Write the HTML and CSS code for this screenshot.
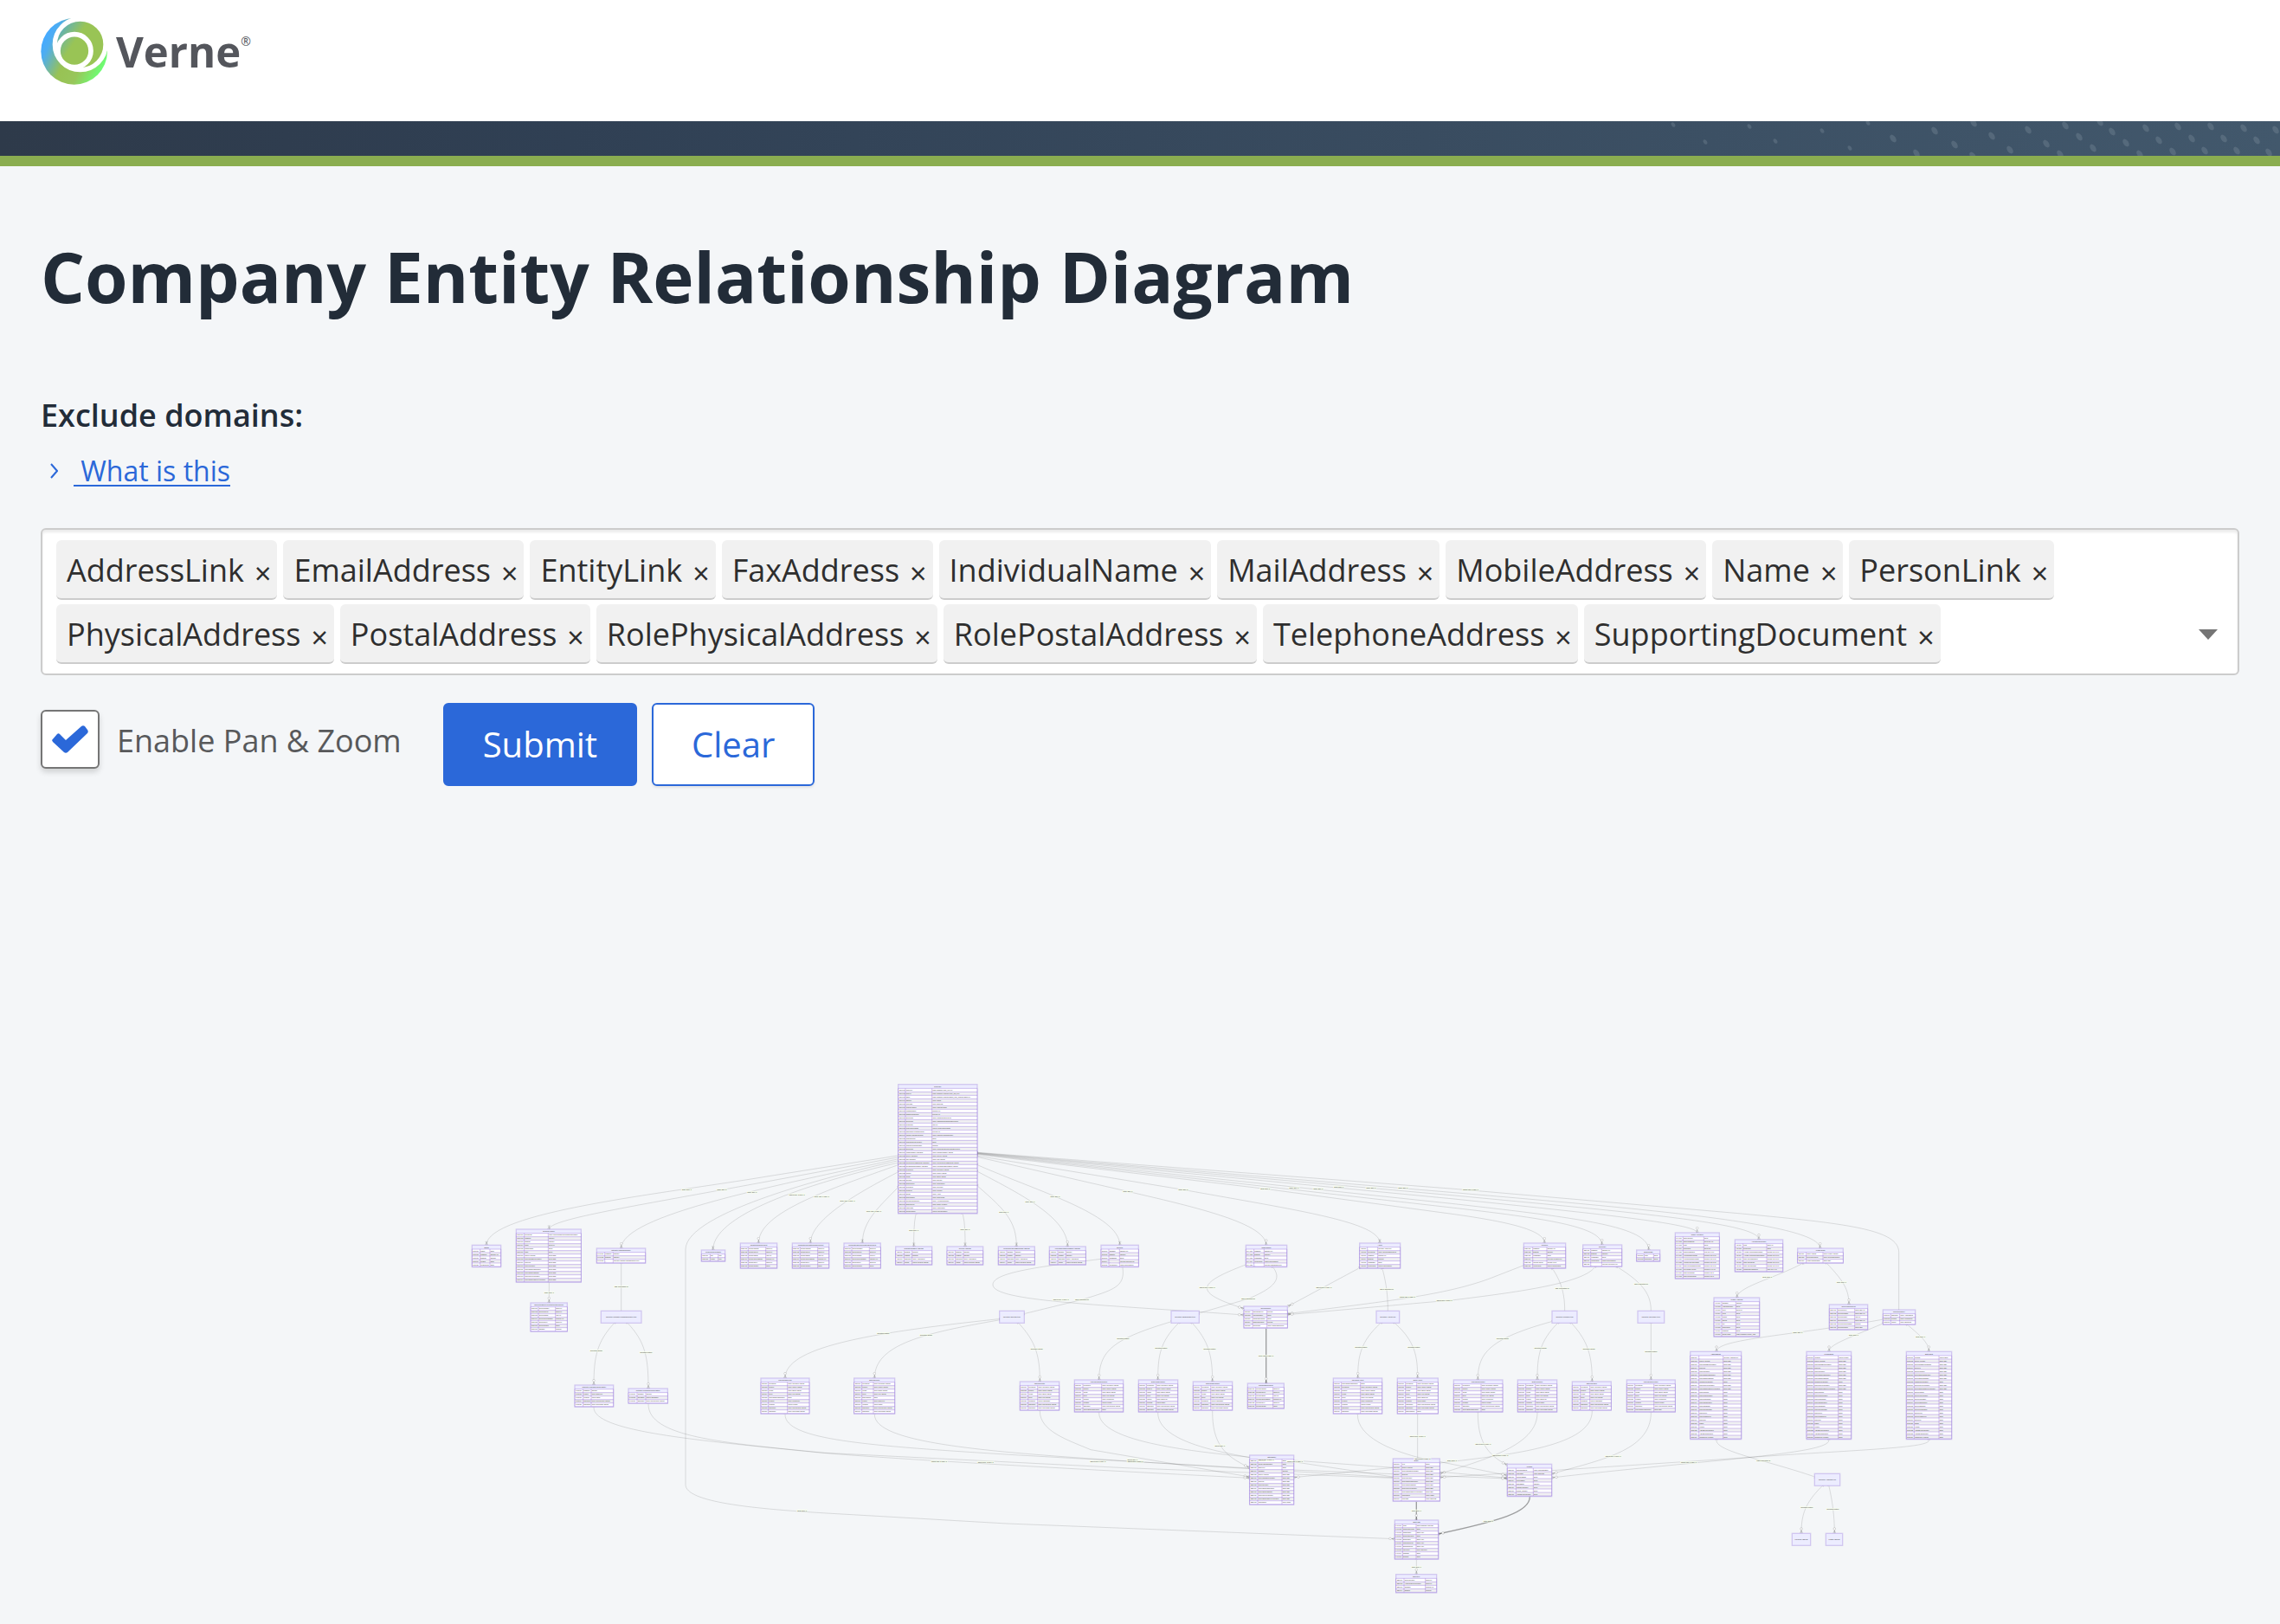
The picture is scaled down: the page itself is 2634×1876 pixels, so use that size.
FILE: index.html
```html
<!DOCTYPE html>
<html lang="en">
<head>
<meta charset="utf-8">
<meta name="viewport" content="width=device-width, initial-scale=1">
<title>Company Entity Relationship Diagram</title>
<link rel="stylesheet" href="styles.css">
</head>
<body>
<header class="site-header">
  <a class="brand" href="#" aria-label="Verne home">
    <svg class="brand-mark" viewBox="0 0 234 234" aria-hidden="true">
      <defs>
        <linearGradient id="brandOuter" gradientUnits="userSpaceOnUse" x1="10" y1="80" x2="225" y2="185">
          <stop offset="0" stop-color="#45aaff"/>
          <stop offset=".1" stop-color="#4eadf0"/>
          <stop offset=".4" stop-color="#98c254"/>
          <stop offset=".65" stop-color="#98c65a"/>
          <stop offset=".95" stop-color="#6cff74"/>
        </linearGradient>
        <linearGradient id="brandInner" gradientUnits="userSpaceOnUse" x1="50" y1="50" x2="140" y2="110">
          <stop offset="0" stop-color="#55aec8"/>
          <stop offset=".7" stop-color="#99c455"/>
        </linearGradient>
      </defs>
      <circle cx="116" cy="118" r="115" fill="url(#brandOuter)"/>
      <circle cx="137" cy="94" r="88" fill="url(#brandInner)" stroke="#fff" stroke-width="16"/>
      <circle cx="117" cy="116" r="57" fill="url(#brandInner)" stroke="#fff" stroke-width="17"/>
    </svg>
    <span class="brand-name">Verne</span><sup class="brand-reg">®</sup>
  </a>
</header>
<div class="banner">
  <svg class="banner-dots" id="bannerDots" viewBox="0 0 734 40" aria-hidden="true"></svg>
</div>

<main class="page">
  <h1 class="page-title">Company Entity Relationship Diagram</h1>

  <form class="filters">
    <label class="field-label" for="exclude">Exclude domains:</label>
    <p class="help">
      <svg class="help-icon" viewBox="0 0 9 18" aria-hidden="true"><path d="M1 1l7 8-7 8" fill="none" stroke="currentColor" stroke-width="2"/></svg>
      <a class="help-link" href="#help">&nbsp;What is this</a>
    </p>

    <div class="combo">
      <ul class="tags">
        <li class="tag">AddressLink<button class="tag-remove" type="button" aria-label="Remove AddressLink">×</button></li>
        <li class="tag">EmailAddress<button class="tag-remove" type="button" aria-label="Remove EmailAddress">×</button></li>
        <li class="tag">EntityLink<button class="tag-remove" type="button" aria-label="Remove EntityLink">×</button></li>
        <li class="tag">FaxAddress<button class="tag-remove" type="button" aria-label="Remove FaxAddress">×</button></li>
        <li class="tag">IndividualName<button class="tag-remove" type="button" aria-label="Remove IndividualName">×</button></li>
        <li class="tag">MailAddress<button class="tag-remove" type="button" aria-label="Remove MailAddress">×</button></li>
        <li class="tag">MobileAddress<button class="tag-remove" type="button" aria-label="Remove MobileAddress">×</button></li>
        <li class="tag">Name<button class="tag-remove" type="button" aria-label="Remove Name">×</button></li>
        <li class="tag">PersonLink<button class="tag-remove" type="button" aria-label="Remove PersonLink">×</button></li>
        <li class="tag">PhysicalAddress<button class="tag-remove" type="button" aria-label="Remove PhysicalAddress">×</button></li>
        <li class="tag">PostalAddress<button class="tag-remove" type="button" aria-label="Remove PostalAddress">×</button></li>
        <li class="tag">RolePhysicalAddress<button class="tag-remove" type="button" aria-label="Remove RolePhysicalAddress">×</button></li>
        <li class="tag">RolePostalAddress<button class="tag-remove" type="button" aria-label="Remove RolePostalAddress">×</button></li>
        <li class="tag">TelephoneAddress<button class="tag-remove" type="button" aria-label="Remove TelephoneAddress">×</button></li>
        <li class="tag">SupportingDocument<button class="tag-remove" type="button" aria-label="Remove SupportingDocument">×</button></li>
        <li class="tag-entry"><input class="tag-input" id="exclude" type="text" autocomplete="off"></li>
      </ul>
      <button class="combo-toggle" type="button" aria-label="Show domains">
        <svg class="combo-arrow" viewBox="0 0 22 12" aria-hidden="true"><path d="M0 0h22L11 12z" fill="#757575"/></svg>
      </button>
    </div>

    <div class="actions">
      <label class="check">
        <input class="check-box" type="checkbox" checked>
        <svg class="check-tick" viewBox="0 0 42 32" aria-hidden="true"><path d="M0 17l6-7c1-1 2-1 3 0l7 7L34 1c1-1 3-1 4 0l3 4c1 1 1 3 0 4L18 31c-1 1-3 1-4 0L1 19z" fill="#2b68d9"/></svg>
        <span class="check-text">Enable Pan &amp; Zoom</span>
      </label>
      <div class="buttons">
        <button class="button button-primary" type="submit">Submit</button>
        <button class="button button-outline" type="reset">Clear</button>
      </div>
    </div>
  </form>

  <svg class="diagram" id="diagram" viewBox="141 3720 7620 1908" role="img" aria-label="Company entity relationship diagram">
    <defs>
      <marker id="one" markerUnits="userSpaceOnUse" markerWidth="14" markerHeight="12" refX="0" refY="6" orient="auto-start-reverse">
        <path class="mark" d="M-9 1v10M-6 1v10" transform="translate(12 0)"/>
      </marker>
      <marker id="many" markerUnits="userSpaceOnUse" markerWidth="24" markerHeight="12" refX="22" refY="6" orient="auto">
        <path class="mark" d="M22 1L12 6l10 5M12 6h10"/><circle class="mark-ring" cx="6" cy="6" r="4"/>
      </marker>
      <marker id="some" markerUnits="userSpaceOnUse" markerWidth="24" markerHeight="12" refX="22" refY="6" orient="auto">
        <path class="mark" d="M22 1L12 6l10 5M12 6h10M10 1v10"/>
      </marker>
    </defs>
    <g id="edges"></g>
    <g id="entities"></g>
    <g id="labels"></g>
  </svg>
</main>
<script src="diagram.js"></script>
</body>
</html>
```
FILE: styles.css
```css
* { box-sizing: border-box; }

body {
  margin: 0;
  background: #f4f6f8;
  color: #222c38;
  font-family: "Open Sans", "Noto Sans", sans-serif;
}

button, input { font: inherit; color: inherit; }

.site-header {
  height: 140px;
  padding: 20px 47px 0;
  background: #fff;
}
.brand {
  display: inline-flex;
  align-items: flex-start;
  color: #54565c;
  text-decoration: none;
}
.brand-mark { width: 78px; height: 78px; }
.brand-name {
  margin-left: 9px;
  font-size: 49px;
  line-height: 78px;
  font-weight: 700;
}
.brand-reg { margin-top: 16px; font-size: 14px; line-height: 24px; }

.banner {
  display: flex;
  justify-content: flex-end;
  height: 52px;
  overflow: hidden;
  background: linear-gradient(90deg, #2e3a4a, #304054 25%, #42586c);
  border-bottom: 12px solid #8aad50;
}
.banner-dots { width: 734px; height: 40px; fill: #8899a4; fill-opacity: .3; }

.page { padding: 79px 47px 0; }

.page-title {
  margin: 0 0 89px;
  font-size: 80px;
  line-height: 96px;
  font-weight: 700;
}

.field-label {
  display: block;
  font-size: 36px;
  line-height: 48px;
  font-weight: 600;
}
.help {
  display: flex;
  align-items: center;
  gap: 18px;
  margin: 16px 0 42px;
  padding-left: 11px;
  color: #2b68d9;
  font-size: 32px;
  line-height: 48px;
}
.help-icon { width: 9px; height: 18px; }
.help-link { color: inherit; text-decoration-thickness: 2px; text-underline-offset: 4px; }

.combo {
  display: flex;
  align-items: flex-end;
  padding: 12px 16px 11px;
  background: #fff;
  border: 2px solid #ccc;
  border-radius: 6px;
  box-shadow: inset 0 3px 3px rgba(0, 0, 0, .08);
}
.tags {
  flex: 1;
  display: flex;
  flex-wrap: wrap;
  gap: 5px 7px;
  margin: 0;
  padding: 0;
  list-style: none;
}
.tag {
  display: flex;
  align-items: center;
  padding: 2px 7px 0 12px;
  background: #f1f1f1;
  border-bottom: 2px solid #ccc;
  border-radius: 6px;
  color: #2e2e2e;
  font-size: 36px;
  line-height: 65px;
}
.tag-remove {
  margin-left: 12px;
  padding: 6px 0 0;
  background: none;
  border: 0;
  font-size: 34px;
  line-height: 48px;
  cursor: pointer;
}
.tag-entry { flex: 1; min-width: 80px; }
.tag-input {
  width: 100%;
  height: 69px;
  padding: 0 12px;
  background: none;
  border: 0;
  outline: 0;
  font-size: 36px;
}
.combo-toggle {
  display: grid;
  place-items: center;
  width: 36px;
  height: 69px;
  padding: 0;
  background: none;
  border: 0;
}
.combo-arrow { width: 22px; height: 12px; }

.actions {
  display: flex;
  align-items: flex-start;
  gap: 48px;
  margin-top: 32px;
}
.check {
  display: grid;
  grid-template-columns: 68px auto;
  align-items: center;
  column-gap: 20px;
  padding-top: 8px;
  color: #58595b;
  font-size: 36px;
  line-height: 64px;
}
.check-text { padding-top: 4px; }
.check-box {
  grid-area: 1 / 1;
  appearance: none;
  width: 68px;
  height: 68px;
  margin: 0;
  background: #fff;
  border: 2px solid #757575;
  border-radius: 6px;
  box-shadow: 0 4px 6px rgba(0, 0, 0, .15);
}
.check-tick { grid-area: 1 / 1; justify-self: center; width: 42px; height: 32px; visibility: hidden; }
.check-box:checked + .check-tick { visibility: visible; }

.buttons { display: flex; gap: 17px; }
.button {
  height: 96px;
  padding: 0 44px;
  border: 2px solid #2b68d9;
  border-radius: 6px;
  font-size: 40px;
  line-height: 56px;
}
.button-primary { background: #2b68d9; color: #fff; }
.button-outline { background: #fff; color: #2b68d9; box-shadow: 0 2px 3px rgba(0, 0, 0, .08); }

.diagram {
  display: block;
  width: 100%;
  margin-top: 332px;
  font-family: "Liberation Sans", Arial, sans-serif;
}
.edge { fill: none; stroke: #333; stroke-width: 3; stroke-opacity: .15; }
.edge-strong { stroke-width: 4; stroke-opacity: .45; }
.mark { fill: none; stroke: #333; stroke-width: 2; stroke-opacity: .25; }
.mark-ring { fill: #fff; stroke: #333; stroke-width: 1; stroke-opacity: .5; }
.box { fill: #ececff; stroke: #9370db; stroke-opacity: .32; stroke-width: 4; }
.row-odd { fill: #fff; }
.row-even { fill: #f0f0f2; }
.grid { fill: none; stroke: #9370db; stroke-opacity: .42; stroke-width: 3; }
.entity-name { fill: #333; font-size: 6px; text-anchor: middle; }
.cell { fill: #333; font-size: 5px; }
.edge-label { fill: #333; font-size: 6px; text-anchor: middle; }
.label-back { fill: #f8ffeb; fill-opacity: .7; }
```
FILE: diagram.js
```js
const NS = 'http://www.w3.org/2000/svg';

function add(parent, tag, attrs, text) {
  const node = document.createElementNS(NS, tag);
  for (const key in attrs) node.setAttribute(key, attrs[key]);
  if (text) node.textContent = text;
  parent.append(node);
  return node;
}

/* Banner texture: x, y of each dot; dots grow towards the right. */
const dots = [[33,4],[70,24],[121,6],[151,23],[205,11],[237,31],[258,2],[287,20],[314,37],[335,11],[358,27],[380,2],[379,40],[401,17],[422,33],[443,10],[464,26],[480,38],[486,5],[502,18],[518,31],[526,1],[540,12],[556,25],[572,38],[579,8],[594,22],[610,35],[616,6],[632,20],[647,34],[654,6],[669,20],[684,34],[692,8],[707,22],[721,36],[729,10]];
dots.forEach(([x, y]) => add(document.getElementById('bannerDots'), 'ellipse', {
  cx: x, cy: y, rx: x < 260 ? 2 : 3, ry: x < 260 ? 3 : 5, transform: `rotate(-35 ${x} ${y})`
}));

/* Shared attribute lists: "name;type" pairs. */
const addressRows = 'startDate;datetime|endDate;datetime|addresses;[array] AddressLink|validTo;[object] PhysicalAddress';
const docRows = 'documentName;string [M]|documentType;string [M]|documentDate;long [M]|documentUploadDate;datetime [M]|documentKey;string [M]|documentLabel;string';
const contactRows = 'telephones;[array] TelephoneAddress|mobiles;[array] MobileAddress|emails;[array] EmailAddress|faxes;[array] FaxAddress|';
const personRows = contactRows + 'persons;[array] PersonLink|roleData;[object] Person|addresses;[array] RolePhysicalAddress|';
const entityRows = contactRows + 'entities;[array] EntityLink|roleData;[object] Entity|addresses;[array] RolePhysicalAddress|addresses;[array] RolePostalAddress';
const otherRows = contactRows + 'otherEntity;[object] OtherEntity|addresses;[array] RolePhysicalAddress|addresses;[array] RolePostalAddress';
const sourceRows = 'SourceAppCode;string (255)|SourceDataElementName;string (255)|SourceId;string (255)|SourceIdentifier;string (255)|SourceBusinessIdentifier;string (255)|SourceBusinessName;string (255)|InitialSourceIdentifier;string|SourceServiceIdentifier;string (255)|SourceBusinessServiceIdentifier;string (255)|';
const dtoRows = sourceRows + 'SourceIdTrack;string|SourceUserIdentifier;string|SourceUserName;string|SourceOrgIdentifier;string|SourceOrgName;string|SourceRelationship;string|SourceType;string|SourceUsageType;string|SourceUri;string|Status;string|Version;string|AddedByUserIdentifier;string|AddedByOrgIdentifier;string|InitialSourceAppCode;string';

/* code, x, y, width, name column, type column, title, rows */
const entities = [
  ['COM',3113,3758,274,25,117,'Company','entityType;[data-constraint] entity_type [M]|subType;[data-constraint] company|entity_sub_type|status;[data-constraint] company|status_code_companyStatus [M]|statuses;[array] Status|entityTags;[array] EntityTag|companyNames;[array] CompanyName|registrationDate;datetime [M]|hasOwnConstitution;boolean [M]|documents;[array] ConstitutionDocument|documents;[array] TranslationConstitutionDocument|filingMonth;long [M]|financialReportDate;[object] FinancialReportDate|hasUltimateHoldingCompany;boolean [M]|ultimateHoldingCompanies;[array] UltimateHoldingCompany|originalCountry;string|originalCompanyNumber;string|originalIncorporationDate;datetime|documents;[array] CertificateOfIncorporationDocument|registeredOfficeAddresses;[array] RegisteredOfficeAddress|serviceAddresses;[array] ServiceAddress|mailAddresses;[array] MailAddress|principalPlaceOfBusinessAddresses;[array] PrincipalPlaceOfBusinessAddress|foreignRegisteredOfficeAddresses;[array] ForeignRegisteredOfficeAddress|telephones;[array] TelephoneAddress|mobiles;[array] MobileAddress|emails;[array] EmailAddress|directors;[array] Director|shareholders;[array] Shareholder|secretaries;[array] Secretary|members;[array] Member|agents;[array] Agent|shareClasses;[array] ShareClass|allocationSummaries;[array] AllocationSummary|shareParcels;[array] ShareAllocation|legacyData;[array] LegacyData|userRepository;[object] UserRepository'],
  ['STS',1636,4315,100,28,62,'Status','Status;string|StartDate;datetime [M]|EndDate;datetime|Reason;string|ReasonCode;string'],
  ['CNM',1789,4260,225,28,111,'CompanyName','documents;[array] SupportingDocumentNotificationName|StartDate;datetime|EndDate;datetime|Name;string [M]|DisplayName;string|Suffix;string|SourceAppCode;string (255)|SourceDataElementName;string (255)|SourceId;string (255)|SourceIdentifier;string (255)|SourceBusinessIdentifier;string (255)|SourceBusinessName;string (255)|SourceServiceIdentifier;string (255)|SourceBusinessServiceIdentifier;string (255)'],
  ['DOC',1839,4515,127,27,86,'SupportingDocumentNotificationName',docRows + '|startDate;datetime'],
  ['UHC',2068,4326,169,28,57,'UltimateHoldingCompany','StartDate;datetime|EndDate;datetime|_;[selector] UltimateHoldingCompany.type'],
  ['UHE',1992,4800,134,29,57,'UltimateHoldingCompanyEntity','StartDate;datetime|entities;[array] EntityLink|roleData;[object] Entity|addresses;[array] RolePhysicalAddress|addresses;[array] RolePostalAddress'],
  ['UHO',2178,4812,136,30,60,'UltimateHoldingCompanyOther','StartDate;datetime|otherEntity;[object] OtherEntity|addresses;[array] RolePhysicalAddress'],
  ['FRD',2431,4332,82,30,58,'FinancialReportDate','Day;long|Month;long'],
  ['DOC',2566,4308,127,27,88,'ConstitutionDocument',docRows],
  ['DOC',2746,4308,127,27,88,'TranslationConstitutionDocument',docRows],
  ['DOC',2925,4308,127,27,88,'CertificateOfIncorporationDocument',docRows],
  ['ADD',3104,4320,126,29,57,'RegisteredOfficeAddress',addressRows],
  ['ADD',3282,4320,125,29,57,'ServiceAddress',addressRows],
  ['ADD',3460,4320,126,29,57,'PrincipalPlaceOfBusinessAddress',addressRows],
  ['ADD',3637,4320,126,29,57,'ForeignRegisteredOfficeAddress',addressRows],
  ['DIR',3816,4315,130,27,64,'Director','StartDate;datetime [M]|EndDate;datetime|ClassName;string|_;[selector] Director.type|roleConsent;[object] RoleConsent'],
  ['SHA',4318,4315,142,28,63,'Shareholder','StartDate;datetime [M]|EndDate;datetime|ClassName;string|roleConsent;[object] RoleConsent|_;[selector] Shareholder.type'],
  ['AGT',4712,4308,141,27,63,'Agent','_;[selector] Agent.type|documents;[array] SupportingDocument|StartDate;datetime [M]|EndDate;datetime|ClassName;string|roleConsent;[object] RoleConsent'],
  ['CNT',4311,4527,151,30,80,'RoleConsent','isConsentGiven;boolean|IndividualName;string|OrganisationName;string|isSignedConsent;boolean|documents;[array] ConsentDocument'],
  ['DOC',4324,4794,126,28,88,'ConsentDocument',docRows],
  ['CNT',2637,4776,168,26,92,'IndividualDirector',contactRows + 'SourceBusinessIdentifier;string|persons;[array] PersonLink|roleData;[object] Person|addresses;[array] RolePhysicalAddress|addresses;[array] RolePostalAddress'],
  ['CNT',2960,4776,141,27,67,'EntityDirector',contactRows + 'EntityNumber;string|entities;[array] EntityLink|roleData;[object] Entity|addresses;[array] RolePhysicalAddress|addresses;[array] RolePostalAddress'],
  ['CNT',3535,4788,136,28,61,'OtherDirector',otherRows],
  ['CNT',3724,4782,169,29,94,'IndividualShareholder',personRows + 'SourceBusinessIdentifier;string'],
  ['CNT',3946,4782,136,27,61,'EntityShareholder',entityRows],
  ['CNT',4135,4788,136,28,61,'OtherShareholder',otherRows],
  ['CNT',4621,4776,169,28,94,'IndividualAgent','SourceBusinessIdentifier;string|' + personRows + 'addresses;[array] RolePostalAddress'],
  ['CNT',4843,4776,141,28,67,'EntityAgent',entityRows + '|EntityNumber;string'],
  ['CNT',5038,4782,170,29,95,'IndividualMember',personRows + 'SourceBusinessIdentifier;string'],
  ['CNT',5260,4782,136,28,61,'EntityMember',entityRows],
  ['CNT',5449,4788,135,28,61,'OtherMember',otherRows],
  ['CNT',5638,4782,168,28,94,'IndividualSecretary',personRows + 'SourceBusinessIdentifier;string (255)'],
  ['MEM',5281,4308,145,31,80,'Member','StartDate;datetime [M]|EndDate;datetime|ClassName;string|_;[selector] Member.type|InterestAmount;decimal (10,2)|roleConsent;[object] RoleConsent'],
  ['SEC',5486,4314,135,27,65,'Secretary','StartDate;datetime [M]|EndDate;datetime|ClassName;string|roleConsent;[object] RoleConsent|_;[selector] Secretary.type'],
  ['SHC',5672,4332,81,26,59,'ShareClass','Code;string|Description;string'],
  ['SAL',5806,4272,153,27,99,'ShareAllocation','ShareIdentifier;string|ShareClassCode;string (20) [M]|Code;string|Description;string (50)|NumberOfShares;long (12, 0) [M]|AmountPaidPerShare;decimal (12, 2) [M]|AmountUnpaidPerShare;decimal (12, 2) [M]|AmountAgreedPerShare;decimal (12, 2) [M]|TotalAmountOfShareClass;decimal (12, 2) [M]|PercentageAmount;decimal (6, 2) [M]|TotalAmountPaid;decimal (12, 2)|TotalAmountUnpaid;decimal (12, 2)'],
  ['ALS',6013,4296,166,28,110,'AllocationSummary','Code;string [M]|Description;string|AverageAmountPaidPerShare;decimal (12, 2) [M]|AverageAmountUnpaidPerShare;decimal (12, 2) [M]|TotalAmountOfShares;decimal (12, 2) [M]|TotalAmountPaid;decimal (12, 2) [M]|TotalAmountUnpaid;decimal (12, 2) [M]|TotalNumberOfShares;long (12, 0) [M]'],
  ['LEG',6230,4326,158,30,88,'LegacyData','legacyAddress;[array] LegacyAddress|genericDocument;[array] GenericDocument|LegacyOriginalName;string (255)'],
  ['LAD',5940,4497,158,27,76,'LegacyAddress','StartDate;datetime|AddressIdentifier;string|Line1;string [M]|Line2;string|Suburb;string|CareOf;string|City;string|RegionCode;string|PostCode;string|CountryCode;[data-constraint] country_code'],
  ['GDC',6340,4521,133,28,88,'GenericDocument','DocumentKey;string (255) [M]|DocumentName;string (255) [M]|DocumentSize;long [M]|DocumentType;string (255) [M]|DocumentUploadDate;datetime|DocumentLabel;string (255)'],
  ['USR',6526,4539,112,27,58,'UserRepository','addresses;[array] AddressDTO|persons;[array] PersonDTO|entities;[array] EntityDTO'],
  ['DTO',5858,4684,177,30,114,'AddressDTO','_;[selector] Address.type|' + dtoRows],
  ['DTO',6261,4684,155,26,110,'PersonDTO','roleData;[object] Person|' + dtoRows],
  ['DTO',6607,4684,157,27,113,'EntityDTO','roleData;[object] Entity|' + dtoRows],
  ['PER',5224,5074,154,30,90,'Person','individualNames;[array] IndividualName|entityTags;[array] EntityTag|CountryOfBirth;string|PlaceOfBirth;string|DateOfBirth;datetime|CustomerIdentifier;string|Person_Identifier;string|AddedByUserIdentifier;string'],
  ['OEN',4331,5043,153,28,112,'OtherEntity','entityName;string|CountryOfRegistration;string|EntityType;string|StartDate;datetime|SourceAppCode;string (255)|SourceDataElementName;string (255)|SourceId;string (255)|SourceIdentifier;string (255)|SourceBusinessIdentifier;string (255)|SourceBusinessName;string (255)|SourceServiceIdentifier;string (255)|SourceBusinessServiceIdentifier;string (255)|entityNames;[array] Name'],
  ['ENT',4828,5055,162,29,112,'Entity','Type;string|SourceAppCode;string (255)|SourceDataElementName;string (255)|SourceId;string (255)|SourceIdentifier;string (255)|SourceBusinessIdentifier;string (255)|SourceBusinessName;string (255)|SourceServiceIdentifier;string (255)|SourceBusinessServiceIdentifier;string (255)|entityNames;[array] Name|entityTags;[array] EntityTag'],
  ['TAG',4834,5268,151,27,74,'EntityTag','Code;[data-constraint] entityTag|StartReasonCode;string|StartReason;string (400)|EndReasonCode;string|EndReason;string (400)|StartComments;string (400)|EndComments;string (400)|objectives;[array] Objective|StartDate;string|EndDate;string'],
  ['OBJ',4838,5456,141,28,102,'Objective','SourceIdentifier;string [M]|AuthorisedRepresentative;string [M]|StartDate;datetime [M]|EndDate;datetime']
];

/* x, y, width, title: boxes without attributes */
const selectors = [
  [2083,4543,140,'[selector] UltimateHoldingCompany.type'],
  [3464,4543,86,'[selector] Director.type'],
  [4059,4543,97,'[selector] Shareholder.type'],
  [4770,4543,80,'[selector] Agent.type'],
  [5379,4543,87,'[selector] Member.type'],
  [5676,4543,92,'[selector] Secretary.type'],
  [6289,5107,88,'[selector] Address.type'],
  [6211,5314,64,'PhysicalAddress'],
  [6328,5314,58,'PostalAddress']
];

const A0 = 'array size: 0', A1 = 'array size: 1', O = 'object min: 0 max: 1', O1 = 'object min: 1 max: 1';
const AM = 'array min: 0 max: 1', H = 'has 1 selection of', S = 'selection option';

/* path, label x, label y, label, end marker */
const edges = [
  ['M3110 4005L2658 4077C2300 4137 1686 4200 1686 4315',2380,4123,A1,'some'],
  ['M3110 4011L2640 4098C2200 4180 1903 4225 1903 4260',2502,4123,A1,'some'],
  ['M3110 4017C2700 4107 2153 4210 2153 4326',2607,4132,A0,'many'],
  ['M3110 4023C2900 4070 2376 4200 2376 4330L2376 5145C2376 5205 2600 5228 2865 5244L3490 5280L4834 5333',2780,5235,A0,'many'],
  ['M3110 4030C2850 4090 2471 4200 2471 4332',2762,4140,O1,'some'],
  ['M3110 4038C2880 4120 2629 4200 2629 4308',2848,4147,AM,'many'],
  ['M3110 4063C2960 4140 2809 4230 2809 4308',2937,4162,AM,'many'],
  ['M3110 4117C3050 4180 2989 4230 2989 4308',3029,4198,'array min: 1 max: 1','some'],
  ['M3174 4208C3167 4240 3167 4280 3167 4320',3167,4264,A1,'some'],
  ['M3337 4208C3345 4240 3345 4280 3345 4320',3345,4261,A1,'some'],
  ['M3390 4112C3480 4190 3523 4230 3523 4320',3479,4201,A1,'some'],
  ['M3390 4061C3540 4140 3700 4220 3700 4320',3570,4165,A0,'many'],
  ['M3390 4038C3600 4130 3881 4210 3881 4315',3657,4147,A1,'some'],
  ['M3390 4010L3909 4129C4150 4185 4388 4240 4388 4315',3909,4129,A0,'many'],
  ['M3390 4006L4101 4123C4500 4195 4782 4235 4782 4308',4101,4123,A1,'some'],
  ['M3390 4001L4385 4120L5040 4208C5240 4236 5353 4265 5353 4308',4385,4120,A0,'many'],
  ['M3390 3999L5040 4186C5350 4222 5552 4250 5552 4314',4485,4117,A0,'many'],
  ['M3390 3998L5040 4172C5480 4222 5714 4250 5714 4332',4569,4120,A0,'many'],
  ['M3390 3997L5040 4155C5520 4205 5882 4240 5882 4272',4640,4113,A0,'many'],
  ['M3390 3996L5040 4143C5700 4205 6096 4240 6096 4296',4752,4117,A0,'many'],
  ['M3390 3995L5040 4133C5700 4190 6308 4240 6308 4326',4863,4117,A0,'many'],
  ['M3390 3994L5040 4120L6025 4205C6400 4240 6581 4260 6581 4340L6581 4539',5097,4123,O1,'one'],
  ['M1903 4446L1903 4515',1903,4480,A0,'many'],
  ['M2153 4380L2153 4543',2153,4459,H,'one'],
  ['M2127 4587C2070 4650 2058 4700 2058 4800',2067,4681,S,'many'],
  ['M2177 4587C2235 4650 2247 4700 2247 4812',2239,4687,S,'many'],
  ['M3816 4363C3600 4390 3441 4410 3441 4452C3441 4510 3800 4520 4311 4557',3677,4504,O,'many'],
  ['M3891 4393C3900 4460 3860 4470 3750 4504L3553 4552',3750,4504,H,'one'],
  ['M3461 4571C3000 4620 2721 4670 2721 4776',3061,4621,S,'many'],
  ['M3461 4575C3200 4620 3031 4660 3031 4776',3210,4627,S,'many'],
  ['M3532 4587C3590 4650 3604 4700 3604 4788',3593,4675,S,'many'],
  ['M4317 4383C4140 4450 4140 4480 4311 4535',4184,4462,O,'many'],
  ['M4413 4393C4440 4430 4425 4460 4326 4501L4159 4550',4326,4501,H,'one'],
  ['M4057 4581C3860 4640 3809 4680 3809 4782',3892,4639,S,'many'],
  ['M4083 4587C4020 4650 4013 4700 4013 4782',4024,4672,S,'many'],
  ['M4134 4587C4190 4650 4202 4700 4202 4788',4192,4675,S,'many'],
  ['M4388 4605L4388 4794',4388,4699,AM,'many',1],
  ['M4708 4396L4464 4527',4588,4462,O,'many'],
  ['M4792 4400C4805 4450 4810 4490 4810 4543',4806,4468,H,'one'],
  ['M4783 4587C4715 4650 4706 4700 4706 4776',4717,4669,S,'many'],
  ['M4836 4587C4905 4650 4913 4700 4913 4776',4900,4669,S,'many'],
  ['M5281 4385L5160 4432C5000 4490 4800 4510 4462 4553',4878,4495,O,'many'],
  ['M5526 4393C5480 4450 5240 4480 5040 4505L4462 4556',5006,4507,O,'many'],
  ['M5383 4400C5415 4450 5423 4490 5423 4543',5414,4465,H,'one'],
  ['M5609 4393C5700 4450 5722 4490 5722 4543',5688,4450,H,'one'],
  ['M5377 4580C5160 4640 5122 4690 5122 4782',5208,4639,S,'many'],
  ['M5397 4587C5335 4650 5328 4700 5328 4782',5339,4672,S,'many'],
  ['M5448 4587C5505 4650 5518 4700 5518 4788',5507,4675,S,'many'],
  ['M5722 4587L5722 4782',5722,4684,S,'many'],
  ['M6244 4380C6150 4430 6020 4460 6020 4497',6125,4426,A0,'many'],
  ['M6333 4380C6390 4440 6408 4470 6408 4521',6382,4444,A0,'many'],
  ['M6523 4573C6200 4630 5949 4640 5949 4684',6231,4618,A0,'many'],
  ['M6523 4588C6400 4640 6339 4660 6339 4684',6424,4627,A0,'many'],
  ['M6613 4593C6670 4640 6685 4660 6685 4684',6656,4633,A0,'many'],
  ['M5949 4992C5949 5030 6120 5060 6287 5117',6112,5062,H,'one'],
  ['M6314 5151C6255 5210 6243 5250 6243 5314',6262,5224,S,'many'],
  ['M6339 5151C6350 5200 6358 5250 6358 5314',6352,5230,S,'many'],
  ['M6338 4992C6338 5040 5900 5060 5378 5121',5853,5068,O,'many'],
  ['M6685 4992C6685 5020 6400 5025 6000 5055L5378 5096L4990 5120',0,0,'','many'],
  ['M5518 4890C5518 5010 5250 5040 4990 5070L4484 5120',4488,5065,O,'many'],
  ['M5328 4896C5328 5000 5180 5050 4990 5107',5200,5044,O,'many'],
  ['M5122 4896C5122 4990 5150 5040 5224 5077',5140,5005,O,'many'],
  ['M5722 4896C5722 5030 5540 5060 5378 5108',5591,5047,O,'many'],
  ['M4913 4902L4913 5055',4913,4978,O1,'one'],
  ['M4705 4902C4705 4980 4820 5025 4913 5050L5224 5113',5032,5062,A0,'many'],
  ['M4202 4890C4202 5000 4240 5045 4331 5086',4228,5010,'object size: 0','many'],
  ['M3809 4896C3809 5000 4150 5030 4330 5050L4828 5086L5224 5122',4930,5056,O,'many'],
  ['M4013 4896C4013 5000 4250 5035 4331 5051',4388,5060,O1,''],
  ['M4484 5066L4828 5118',4488,5065,'','one'],
  ['M3604 4890C3604 4960 3700 4990 3780 5024L4331 5118',3925,5058,'object size: 0','many'],
  ['M2721 4902C2721 4990 3000 5010 3515 5042L4330 5088L5224 5124',3935,5065,O,'many'],
  ['M3031 4902C3031 5000 3400 5030 3900 5063L4331 5090L4828 5120',3805,5065,O,'one'],
  ['M2058 4878C2058 4960 2400 4990 2820 5032C3000 5050 3600 5085 4331 5122',3255,5065,O1,'many'],
  ['M2247 4866C2247 4980 2500 5000 2860 5035L3900 5087L4828 5122',3416,5067,O1,'one'],
  ['M4909 5205L4909 5268',4909,5235,A0,'many',1],
  ['M5302 5188C5302 5240 5200 5270 4985 5316',5158,5272,A0,'many',1],
  ['M4909 5406L4909 5456',4909,5431,A0,'many']
];

const edgeLayer = document.getElementById('edges');
const entityLayer = document.getElementById('entities');
const labelLayer = document.getElementById('labels');

edges.forEach(([d, x, y, label, end, strong]) => {
  const attrs = { d, class: strong ? 'edge edge-strong' : 'edge', 'marker-start': 'url(#one)' };
  if (end) attrs['marker-end'] = `url(#${end})`;
  add(edgeLayer, 'path', attrs);
  if (!label) return;
  const width = label.length * 3;
  add(labelLayer, 'rect', { class: 'label-back', x: x - width / 2, y: y - 4, width, height: 8 });
  add(labelLayer, 'text', { class: 'edge-label', x, y: y + 2 }, label);
});

entities.forEach(([code, x, y, w, c1, c2, title, rowText]) => {
  const rows = rowText.split(/\|(?=[^|;]*;)/);
  const height = 16 + rows.length * 12;
  add(entityLayer, 'rect', { class: 'box', x, y, width: w, height });
  add(entityLayer, 'text', { class: 'entity-name', x: x + w / 2, y: y + 10 }, title);
  rows.forEach((row, i) => {
    const [name, type] = row.split(';');
    const top = y + 14 + i * 12;
    add(entityLayer, 'rect', { class: i % 2 ? 'row-even' : 'row-odd', x: x + 1, y: top, width: w - 2, height: 12 });
    add(entityLayer, 'text', { class: 'cell', x: x + 3, y: top + 8 }, code + '.' + String(i + 1).padStart(3, '0'));
    add(entityLayer, 'text', { class: 'cell', x: x + c1 + 2, y: top + 8 }, name);
    add(entityLayer, 'text', { class: 'cell', x: x + c2 + 2, y: top + 8 }, type);
  });
  let d = '';
  for (let i = 0; i <= rows.length; i++) d += `M${x} ${y + 14 + i * 12}h${w}`;
  [0, c1, c2, w].forEach(c => { d += `M${x + c} ${y + 14}v${rows.length * 12}`; });
  add(entityLayer, 'path', { class: 'grid', d });
});

selectors.forEach(([x, y, w, title]) => {
  add(entityLayer, 'rect', { class: 'box', x, y, width: w, height: 42 });
  add(entityLayer, 'text', { class: 'entity-name', x: x + w / 2, y: y + 23 }, title);
});
```
